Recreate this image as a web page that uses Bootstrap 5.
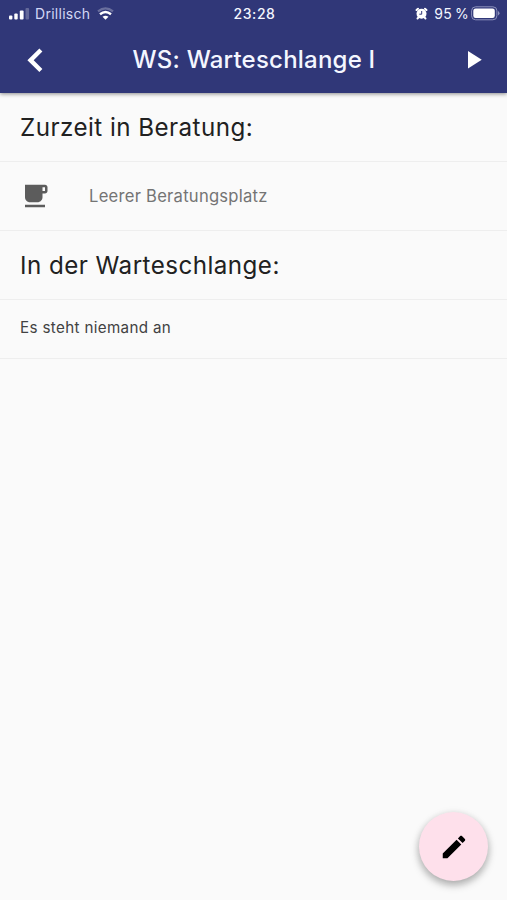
<!DOCTYPE html>
<html lang="de">
<head>
<meta charset="utf-8">
<meta name="viewport" content="width=device-width, initial-scale=1">
<title>WS: Warteschlange I</title>
<link href="https://cdn.jsdelivr.net/npm/bootstrap@5.3.0/dist/css/bootstrap.min.css" rel="stylesheet">
<style>
body { font-family: Inter, "Liberation Sans", sans-serif; background: #fafafa; color: #212121; height: 900px; overflow: hidden; }
svg { display: block; flex: none; }
.app-top { background: #303778; color: #f4f6ff; height: 93px; box-shadow: 0 1px 4px rgba(0,0,0,.45); }
.status { height: 27px; font-size: 14px; line-height: 27px; padding: 0 7px 0 9px; }
.status > div { flex: 1 1 0; }
.carrier { color: #d3d7f5; letter-spacing: .28px; margin-left: 5px; }
.wifi { margin-left: 7px; }
.clock { font-weight: 500; letter-spacing: .55px; }
.power { letter-spacing: .35px; }
.percent { margin-left: 6px; word-spacing: -1.5px; }
.cell { margin-left: 2px; }
.bar { height: 66px; padding: 0 20px 0 21px; }
.bar h1 { font-size: 24px; font-weight: 500; letter-spacing: .22px; }
.bar .btn { width: 30px; height: 30px; }
.bar .btn:last-child { position: relative; left: 1px; }
.queue .list-group-item { background: transparent; border-color: #eeeeee !important; padding: 0 20px; color: inherit; }
.row-title { height: 69px; }
.queue .row-title { padding-top: 2px; }
.row-title h2 { font-size: 24.2px; font-weight: 400; letter-spacing: .45px; }
.row-seat { height: 68.5px; }
.seat-text { color: #747474; font-size: 16.6px; letter-spacing: .25px; margin-left: 39px; padding-top: 2px; }
.queue .row-note { height: 59px; font-size: 15.2px; letter-spacing: .34px; color: #424242; }
.fab { width: 69px; height: 69px; background: #fee0eb; right: 19px; bottom: 19px; box-shadow: 0 4px 8px rgba(0,0,0,.28), 0 2px 10px rgba(0,0,0,.1); }
</style>
<script src="https://cdn.jsdelivr.net/npm/bootstrap@5.3.0/dist/js/bootstrap.bundle.min.js"></script>
</head>
<body>
<header class="app-top position-relative">
  <div class="status d-flex align-items-center">
    <div class="d-flex align-items-center">
      <svg width="21" height="13" viewBox="0 0 21 13" fill="#fff"><rect y="8.5" width="3.4" height="4" rx="1"/><rect x="5.3" y="6.5" width="3.4" height="6" rx="1"/><rect x="10.8" y="3.5" width="3.8" height="9" rx="1"/><rect x="16.5" y="1" width="3.6" height="11.5" rx="1" opacity=".25"/></svg>
      <span class="carrier">Drillisch</span>
      <svg class="wifi" width="17" height="13" viewBox="0 0 17 13" fill="none" stroke="#fff" stroke-width="2.2"><path d="M1 4.4Q8.500-1.800 16 4.400" opacity=".28"/><path d="M3 7.200Q8.500 2.800 14 7.200" stroke-width="2.500"/><path d="M5.500 9.800Q8.500 7.600 11.500 9.800L8.500 12.800Z" fill="#fff" stroke="none"/></svg>
    </div>
    <span class="clock">23:28</span>
    <div class="power d-flex align-items-center justify-content-end">
      <svg width="13" height="13" viewBox="0 0 13 13"><g fill="none" stroke="#fff" stroke-width="2" stroke-linecap="round"><path d="M1.500 3L3 1.700M11.500 3L10 1.700M2.500 11.500L3.300 10.600M10.500 11.500L9.700 10.600"/></g><circle cx="6.500" cy="6.800" r="5" fill="#fff"/><path d="M6.700 4V7.200H4.300" fill="none" stroke="#303778" stroke-width="1"/></svg>
      <span class="percent text-nowrap">95 %</span>
      <svg class="cell" width="29" height="15" viewBox="0 0 29 15"><rect x=".6" y=".8" width="25.300" height="13" rx="4" fill="none" stroke="#8d92bc" stroke-width="1"/><rect x="2.300" y="2.500" width="21.500" height="9.600" rx="2.300" fill="#fff"/><path d="M27 5v4.500q1.500-.7 1.500-2.250T27 5Z" fill="#8d92bc"/></svg>
    </div>
  </div>
  <nav class="bar d-flex align-items-center justify-content-between">
    <button class="btn p-0 border-0" aria-label="Zurück"><svg width="29" height="29" viewBox="0 0 24 24" fill="#fff"><path d="M17.700 4.600L15.200 2.100 5.300 11.700l9.900 9.900 2.500-2.500-7.200-7.400z"/></svg></button>
    <h1 class="m-0 text-nowrap">WS: Warteschlange I</h1>
    <button class="btn p-0 border-0" aria-label="Start"><svg width="30" height="30" viewBox="0 0 24 24" fill="#fff"><path d="M8 4.700v14l11-7z"/></svg></button>
  </nav>
</header>
<main class="queue">
  <ul class="list-group list-group-flush border-bottom-0">
    <li class="list-group-item row-title d-flex align-items-center"><h2 class="m-0">Zurzeit in Beratung:</h2></li>
    <li class="list-group-item row-seat d-flex align-items-center"><svg width="30" height="30" viewBox="0 0 24 24" fill="#5c5c5c"><path d="M20 3H4v10c0 2.210 1.790 4 4 4h6c2.210 0 4-1.790 4-4v-3h2c1.110 0 2-.89 2-2V5c0-1.110-.89-2-2-2zm0 5h-2V5h2v3zM4 19h16v2H4z"/></svg><span class="seat-text">Leerer Beratungsplatz</span></li>
    <li class="list-group-item row-title d-flex align-items-center"><h2 class="m-0">In der Warteschlange:</h2></li>
    <li class="list-group-item row-note d-flex align-items-center border-bottom">Es steht niemand an</li>
  </ul>
</main>
<button class="fab btn rounded-circle border-0 p-0 position-fixed d-flex align-items-center justify-content-center" aria-label="Bearbeiten"><svg width="30" height="30" viewBox="0 0 24 24" fill="#000"><path d="M3 17.250V21h3.750L17.810 9.940l-3.750-3.750L3 17.250zM20.710 7.040c.39-.39.39-1.020 0-1.410l-2.340-2.340c-.39-.39-1.020-.39-1.410 0l-1.830 1.830 3.750 3.750 1.830-1.830z"/></svg></button>
</body>
</html>
